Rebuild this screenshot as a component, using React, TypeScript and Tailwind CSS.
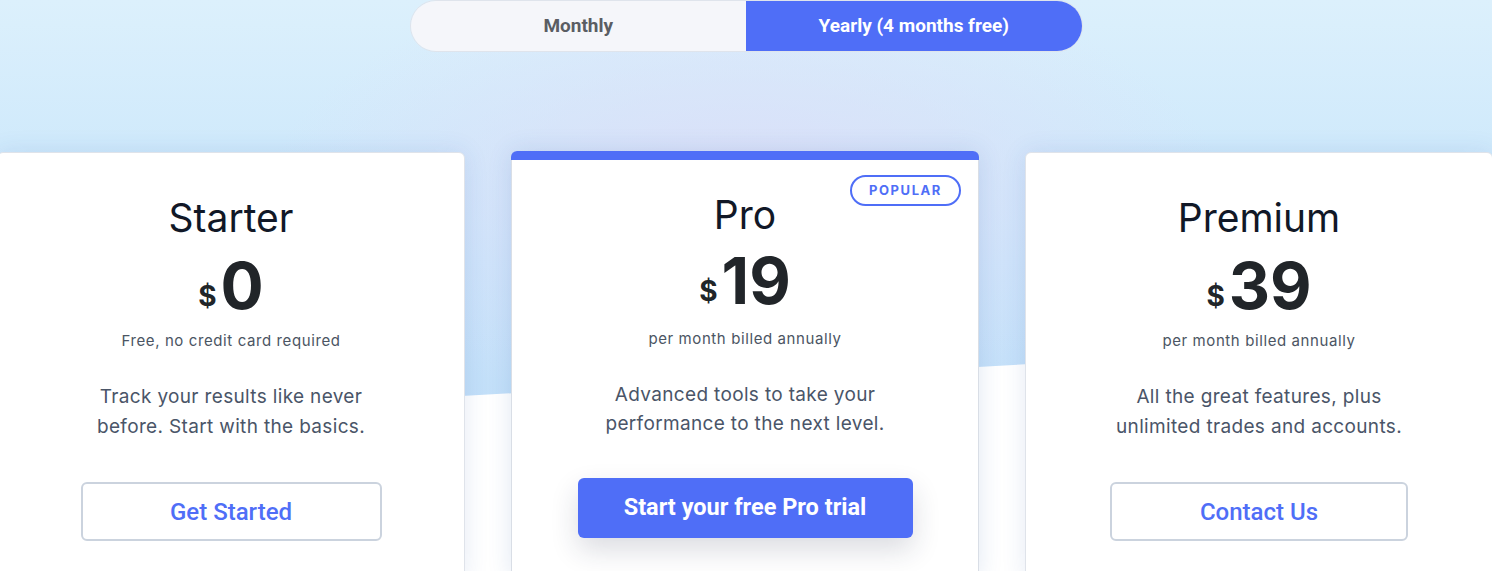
import React from 'react';

const cardFont = { fontFamily: 'Inter, "Noto Sans", sans-serif' };

export default function App() {
  return (
    <div className="relative min-h-[571px] w-full overflow-hidden bg-white" style={cardFont}>
      {/* slanted blue backdrop */}
      <div className="absolute inset-x-0 top-0 h-[430px] bg-[radial-gradient(ellipse_480px_220px_at_50%_45%,#dcdff8_0%,rgba(220,223,248,0)_100%),linear-gradient(180deg,#dcf0fc_0%,#c7e5fb_60%,#c2def8_100%)] [clip-path:polygon(0_0,100%_0,100%_338px,0_422px)]" />

      <div className="relative flex flex-col items-center">
        {/* billing toggle */}
        <div className="flex h-[52px] w-[673px] overflow-hidden rounded-full border border-[#dfe4ec] font-['Roboto',sans-serif] text-[19px] font-bold">
          <button className="flex flex-1 items-center justify-center bg-[#f5f6fa] text-[#5a5d63]">Monthly</button>
          <button className="flex flex-1 items-center justify-center bg-[#4f6ef7] text-white">Yearly (4 months free)</button>
        </div>

        {/* plans */}
        <div className="mt-[100px] flex w-full items-start justify-center gap-[46px] pr-[2px]">
          {/* Starter */}
          <div className="flex w-[468px] shrink-0 flex-col items-center rounded-md border border-[#dfe3ea] bg-white pb-10 pt-[41px] shadow-[0_0_24px_rgba(40,90,170,0.12)]">
            <h3 className="text-[39px] leading-[47px] text-[#111827]">Starter</h3>
            <div className="mt-[13px] flex items-end font-bold text-[#212529]">
              <span className="mb-[8px] mr-[4px] text-[28px] leading-none">$</span>
              <span className="text-[64px] leading-none">0</span>
            </div>
            <p className="mt-[12px] text-[15px] leading-[22px] tracking-[0.04em] text-[#4b5563]">Free, no credit card required</p>
            <p className="mt-[30px] text-center text-[19px] leading-[30px] tracking-[0.018em] text-[#4a5568]">
              Track your results like never
              <br />
              before. Start with the basics.
            </p>
            <button className="mt-[40px] h-[59px] w-[301px] rounded-md border-2 border-[#cbd3de] font-['Roboto',sans-serif] text-[24px] font-medium text-[#4f6ef7]">
              Get Started
            </button>
          </div>

          {/* Pro */}
          <div className="relative -mt-px flex w-[468px] shrink-0 flex-col items-center rounded-md border-x border-b border-[#d9dee6] bg-white pb-10 shadow-[0_0_24px_rgba(40,90,170,0.14)]">
            <div className="-mx-px h-[9px] w-[calc(100%+2px)] rounded-t-md bg-[#4f6ef7]" />
            <span className="absolute right-[17px] top-[24px] flex h-[31px] w-[111px] items-center justify-center rounded-full border-2 border-[#4f6ef7] text-[13px] font-bold tracking-[0.12em] text-[#4f6ef7]">
              POPULAR
            </span>
            <h3 className="mt-[31px] text-[39px] leading-[47px] text-[#111827]">Pro</h3>
            <div className="mt-[11px] flex items-end font-bold text-[#212529]">
              <span className="mb-[8px] mr-[4px] text-[28px] leading-none">$</span>
              <span className="text-[64px] leading-none">19</span>
            </div>
            <p className="mt-[15px] text-[15px] leading-[22px] tracking-[0.04em] text-[#4b5563]">per month billed annually</p>
            <p className="mt-[30px] text-center text-[19px] leading-[29px] tracking-[0.018em] text-[#4a5568]">
              Advanced tools to take your
              <br />
              performance to the next level.
            </p>
            <button className="mt-[40px] h-[60px] w-[335px] rounded-md bg-[#4f6ef7] font-['Roboto',sans-serif] text-[23.5px] font-bold text-white shadow-[0_12px_28px_rgba(30,40,70,0.16)]">
              Start your free Pro trial
            </button>
          </div>

          {/* Premium */}
          <div className="flex w-[468px] shrink-0 flex-col items-center rounded-md border border-[#dfe3ea] bg-white pb-10 pt-[41px] shadow-[0_0_24px_rgba(40,90,170,0.12)]">
            <h3 className="text-[39px] leading-[47px] text-[#111827]">Premium</h3>
            <div className="mt-[13px] flex items-end font-bold text-[#212529]">
              <span className="mb-[8px] mr-[4px] text-[28px] leading-none">$</span>
              <span className="text-[64px] leading-none">39</span>
            </div>
            <p className="mt-[12px] text-[15px] leading-[22px] tracking-[0.04em] text-[#4b5563]">per month billed annually</p>
            <p className="mt-[30px] text-center text-[19px] leading-[30px] tracking-[0.018em] text-[#4a5568]">
              All the great features, plus
              <br />
              unlimited trades and accounts.
            </p>
            <button className="mt-[40px] h-[59px] w-[298px] rounded-md border-2 border-[#cbd3de] font-['Roboto',sans-serif] text-[24px] font-medium text-[#4f6ef7]">
              Contact Us
            </button>
          </div>
        </div>
      </div>
    </div>
  );
}
